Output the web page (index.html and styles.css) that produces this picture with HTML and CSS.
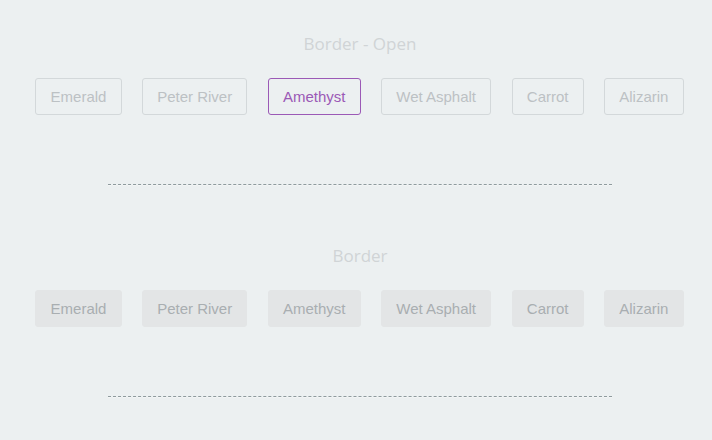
FILE: index.html
```html
<!DOCTYPE html>
<html>
<head>
<meta charset="utf-8">
<link rel="stylesheet" href="styles.css">
</head>
<body>
<main class="page">
<section class="demo demo-first">
  <h2 class="demo-title">Border - Open</h2>
  <div class="btn-row">
    <button class="btn btn-open">Emerald</button>
    <button class="btn btn-open">Peter River</button>
    <button class="btn btn-open btn-active">Amethyst</button>
    <button class="btn btn-open">Wet Asphalt</button>
    <button class="btn btn-open">Carrot</button>
    <button class="btn btn-open">Alizarin</button>
  </div>
</section>
<hr class="divider">
<section class="demo">
  <h2 class="demo-title">Border</h2>
  <div class="btn-row">
    <button class="btn btn-fill">Emerald</button>
    <button class="btn btn-fill">Peter River</button>
    <button class="btn btn-fill">Amethyst</button>
    <button class="btn btn-fill">Wet Asphalt</button>
    <button class="btn btn-fill">Carrot</button>
    <button class="btn btn-fill">Alizarin</button>
  </div>
</section>
<hr class="divider">
</main>
</body>
</html>
```

FILE: styles.css
```css
html, body {
  margin: 0;
  padding: 0;
  background: #ecf0f1;
}
body {
  height: 440px;
  overflow: hidden;
}
.page {
  width: 720px;
}
.demo {
  padding: 59px 0 69px;
  display: flex;
  flex-direction: column;
  align-items: center;
}
.demo-first {
  padding-top: 33px;
}
.demo-title {
  margin: 0 0 23px;
  font-family: "Open Sans", sans-serif;
  font-weight: 400;
  font-size: 17px;
  line-height: 22px;
  color: #d0d4d6;
}
.btn-row {
  display: flex;
  gap: 20.4px;
  padding-right: 1px;
}
.btn {
  height: 37px;
  padding: 0 14.2px;
  border-radius: 3px;
  font-family: "Liberation Sans", Arial, sans-serif;
  font-size: 15px;
  line-height: 35px;
  cursor: pointer;
}
.btn-open {
  background: transparent;
  border: 1px solid #d3d8da;
  color: #bcc1c4;
}
.btn-open.btn-active {
  border-color: #9b59b6;
  color: #9b59b6;
}
.btn-fill {
  background: #e3e5e6;
  border: 1px solid #e3e5e6;
  color: #a9aeb1;
}
.divider {
  width: 504px;
  margin: 0 auto;
  height: 0;
  border: 0;
  border-top: 1px dashed #8f9b9e;
  border-bottom: 1px dashed #f4f6f6;
}
```
